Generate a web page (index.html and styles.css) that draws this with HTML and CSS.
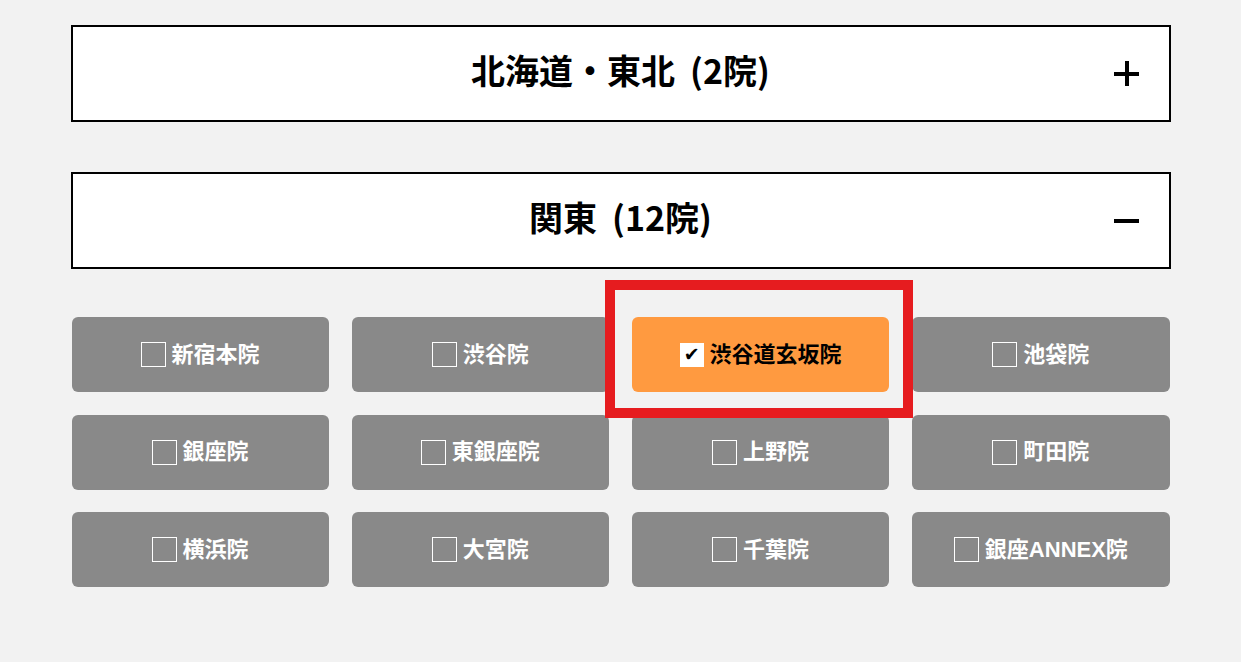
FILE: index.html
```html
<!DOCTYPE html>
<html lang="ja">
<head>
<meta charset="utf-8">
<title>院一覧</title>
<link rel="stylesheet" href="styles.css">
</head>
<body>
<main class="wrap">
  <section class="area">
    <h2 class="area-head">北海道・東北<span class="count">(2院)</span><span class="toggle plus"></span></h2>
  </section>
  <section class="area">
    <h2 class="area-head">関東<span class="count">(12院)</span><span class="toggle minus"></span></h2>
    <div class="clinics">
      <label class="clinic"><span class="box"></span>新宿本院</label>
      <label class="clinic"><span class="box"></span>渋谷院</label>
      <label class="clinic checked"><span class="box">✔</span>渋谷道玄坂院<span class="highlight"></span></label>
      <label class="clinic"><span class="box"></span>池袋院</label>
      <label class="clinic"><span class="box"></span>銀座院</label>
      <label class="clinic"><span class="box"></span>東銀座院</label>
      <label class="clinic"><span class="box"></span>上野院</label>
      <label class="clinic"><span class="box"></span>町田院</label>
      <label class="clinic"><span class="box"></span>横浜院</label>
      <label class="clinic"><span class="box"></span>大宮院</label>
      <label class="clinic"><span class="box"></span>千葉院</label>
      <label class="clinic"><span class="box"></span>銀座ANNEX院</label>
    </div>
  </section>
</main>
</body>
</html>
```
FILE: styles.css
```css
html, body {
  margin: 0;
  padding: 0;
  background: #f2f2f2;
}
body {
  font-family: "Liberation Sans", "Noto Sans CJK JP", sans-serif;
  color: #000;
}
.wrap {
  width: 1100px;
  margin: 0 auto;
  padding-top: 25px;
}
.area {
  margin-bottom: 50px;
}
.area-head {
  position: relative;
  margin: 0;
  height: 97px;
  box-sizing: border-box;
  border: 2px solid #000;
  background: #fff;
  display: flex;
  align-items: center;
  justify-content: center;
  padding-bottom: 7px;
  font-family: "Noto Sans CJK JP", sans-serif;
  font-size: 34px;
  font-weight: 700;
  line-height: 1;
}
.count {
  margin-left: 15px;
}
.toggle {
  position: absolute;
  right: 30px;
  top: 50%;
  width: 25px;
  height: 25px;
  margin-top: -12.5px;
}
.toggle::before,
.toggle::after {
  content: "";
  position: absolute;
  background: #000;
}
.toggle::before {
  left: 0;
  right: 0;
  top: 11px;
  height: 4px;
}
.plus::after {
  top: 0;
  bottom: 0;
  left: 11px;
  width: 4px;
}
.clinics {
  display: grid;
  grid-template-columns: repeat(4, 1fr);
  column-gap: 23px;
  row-gap: 22.5px;
  padding: 0 1px;
  margin-top: 48px;
}
.clinic {
  position: relative;
  height: 75px;
  border-radius: 6px;
  background: #898989;
  color: #fff;
  display: flex;
  align-items: center;
  justify-content: center;
  font-size: 22px;
  font-weight: 700;
  line-height: 1;
}
.box {
  width: 25px;
  height: 25px;
  box-sizing: border-box;
  border: 1px solid #fff;
  margin-right: 6px;
  display: flex;
  align-items: center;
  justify-content: center;
  font-family: "DejaVu Sans", sans-serif;
  font-size: 19px;
  font-weight: 400;
  color: #000;
}
.clinic.checked {
  background: #ff9a40;
  color: #000;
}
.clinic.checked .box {
  background: #fff;
  width: 24px;
  height: 24px;
}
.highlight {
  position: absolute;
  left: -27px;
  right: -24px;
  top: -37px;
  bottom: -26px;
  border: 10px solid #e61c1f;
  z-index: 2;
}
```
